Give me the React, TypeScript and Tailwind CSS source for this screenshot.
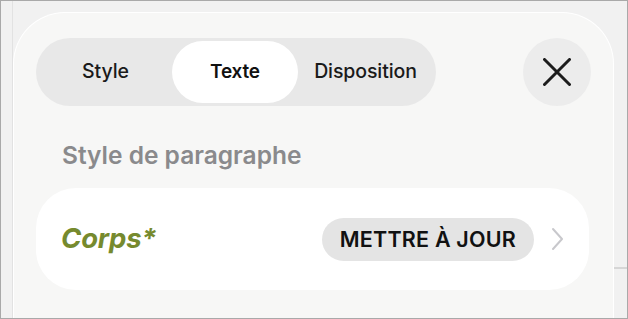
const tabs = [
  { label: "Style", w: "w-[133px]", active: false },
  { label: "Texte", w: "w-[126px]", active: true },
  { label: "Disposition", w: "w-[135px]", active: false },
];

export default function App() {
  return (
    <div
      className="w-[628px] h-[319px] border border-[#a9a9a9] bg-[#f1f1f1] flex overflow-hidden"
      style={{ fontFamily: "Inter, 'Noto Sans', sans-serif" }}
    >
      <div className="w-[12px] border-r border-[#e2e2e2] shrink-0" />
      <div className="flex-1 pt-[11px] flex">
        <div className="w-[601px] h-full rounded-t-[52px] bg-[#f7f7f6] border border-white border-b-0 pt-[25px] px-[22px]">
          <div className="flex items-center justify-between">
            <div className="flex items-center h-[68px] rounded-full bg-[#e8e8e8] p-[3px]">
              {tabs.map((t) => (
                <div
                  key={t.label}
                  className={
                    t.active
                      ? `${t.w} h-[62px] rounded-full bg-white flex items-center justify-center text-[19px] font-semibold tracking-[-0.2px] text-[#111]`
                      : `${t.w} h-[62px] rounded-full flex items-center justify-center text-[19.5px] font-medium tracking-[-0.1px] text-[#1a1a1a]`
                  }
                >
                  {t.label}
                </div>
              ))}
            </div>
            <button className="w-[68px] h-[68px] rounded-full bg-[#ececec] flex items-center justify-center">
              <svg width="28" height="28" viewBox="0 0 28 28" fill="none">
                <path d="M1.5 1.5 L26.5 26.5 M26.5 1.5 L1.5 26.5" stroke="#1c1c1c" strokeWidth="3" strokeLinecap="round" />
              </svg>
            </button>
          </div>
          <div className="mt-[35px] pl-[26px] text-[24.5px] font-semibold text-[#8a8a8c] leading-[28px]">
            Style de paragraphe
          </div>
          <div className="mt-[19px] w-[553px] h-[102px] rounded-[40px] bg-white flex items-center pl-[25px] pr-[25px]">
            <span className="text-[27.5px] font-bold italic text-[#768a2e] tracking-[-0.2px]">Corps*</span>
            <div className="ml-auto flex items-center gap-[17px]">
              <span className="h-[43px] px-[18px] rounded-full bg-[#e4e4e4] flex items-center text-[21.5px] font-semibold tracking-[0.2px] text-[#111]">
                METTRE À JOUR
              </span>
              <svg width="13" height="24" viewBox="0 0 13 24" fill="none">
                <path d="M2 2 L11 12 L2 22" stroke="#c8c8cc" strokeWidth="2" strokeLinecap="round" strokeLinejoin="round" />
              </svg>
            </div>
          </div>
        </div>
        <div className="flex-1 flex flex-col">
          <div className="h-[257px] border-b-2 border-[#d6d6d6]" />
        </div>
      </div>
    </div>
  );
}
